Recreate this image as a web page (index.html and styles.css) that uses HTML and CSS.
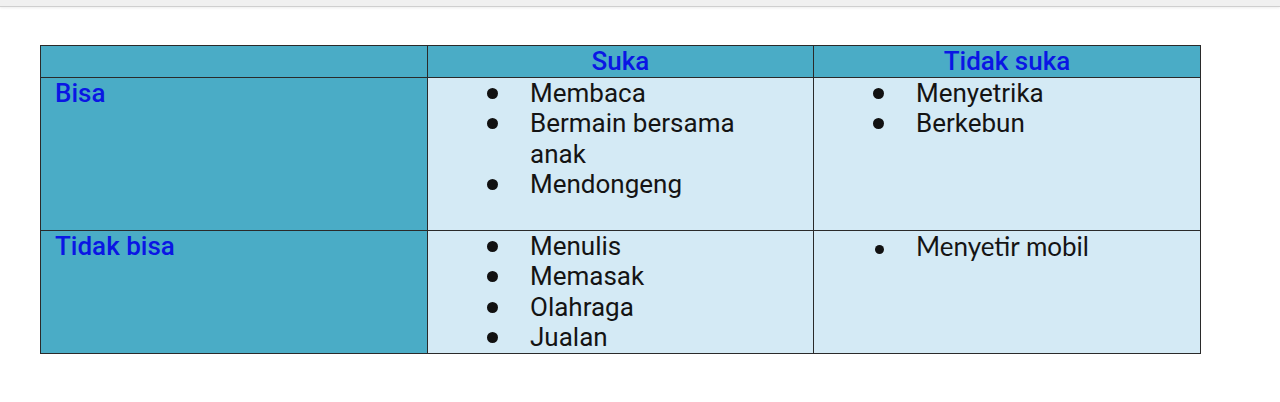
FILE: index.html
```html
<!DOCTYPE html>
<html lang="id">
<head>
<meta charset="utf-8">
<title>Tabel</title>
<link rel="stylesheet" href="styles.css">
</head>
<body>
<div class="topbar"></div>
<main class="page">
  <table class="grid">
    <colgroup>
      <col class="c1"><col class="c2"><col class="c3">
    </colgroup>
    <tr class="head">
      <th class="label"></th>
      <th class="label">Suka</th>
      <th class="label">Tidak suka</th>
    </tr>
    <tr class="r1">
      <th class="label rowlabel">Bisa</th>
      <td class="cell">
        <ul class="list">
          <li>Membaca</li>
          <li>Bermain bersama anak</li>
          <li>Mendongeng</li>
        </ul>
      </td>
      <td class="cell">
        <ul class="list">
          <li>Menyetrika</li>
          <li>Berkebun</li>
        </ul>
      </td>
    </tr>
    <tr class="r2">
      <th class="label rowlabel">Tidak bisa</th>
      <td class="cell">
        <ul class="list">
          <li>Menulis</li>
          <li>Memasak</li>
          <li>Olahraga</li>
          <li>Jualan</li>
        </ul>
      </td>
      <td class="cell">
        <ul class="list alt">
          <li>Menyetir mobil</li>
        </ul>
      </td>
    </tr>
  </table>
</main>
</body>
</html>
```

FILE: styles.css
```css
html, body {
  margin: 0;
  padding: 0;
  background: #ffffff;
}
body {
  font-family: Roboto, "Liberation Sans", sans-serif;
  color: #141414;
}
.topbar {
  height: 6px;
  background: #f0f0f0;
  border-bottom: 1px solid #cfcfcf;
  box-shadow: 0 1px 3px rgba(0,0,0,0.08);
}
.page {
  padding: 38px 0 0 40px;
}
.grid {
  border-collapse: collapse;
  table-layout: fixed;
  width: 1161px;
  font-size: 26px;
  line-height: 30.5px;
}
.c1 { width: 387px; }
.c2 { width: 386px; }
.c3 { width: 387px; }
.grid th, .grid td {
  border: 1px solid #2a2a2a;
  padding: 0;
  vertical-align: top;
}
.label {
  background: #4aacc6;
  color: #0a16e4;
  font-weight: 500;
  text-align: center;
}
.head { height: 30px; }
.r1 { height: 153px; }
.r2 { height: 121px; }
.rowlabel {
  text-align: left;
  padding: 0 0 0 14px !important;
}
.cell {
  background: #d4eaf5;
  padding: 0 30px 0 0 !important;
}
.list {
  list-style: none;
  margin: 0;
  padding: 0 0 0 102px;
}
.list li {
  position: relative;
}
.list li::before {
  content: "";
  position: absolute;
  left: -43px;
  top: 10px;
  width: 11px;
  height: 11px;
  border-radius: 50%;
  background: #111;
}
.list.alt {
  font-family: Lato, "Open Sans", sans-serif;
}
.list.alt li::before {
  width: 9px;
  height: 9px;
  left: -41px;
  top: 14px;
}
```
